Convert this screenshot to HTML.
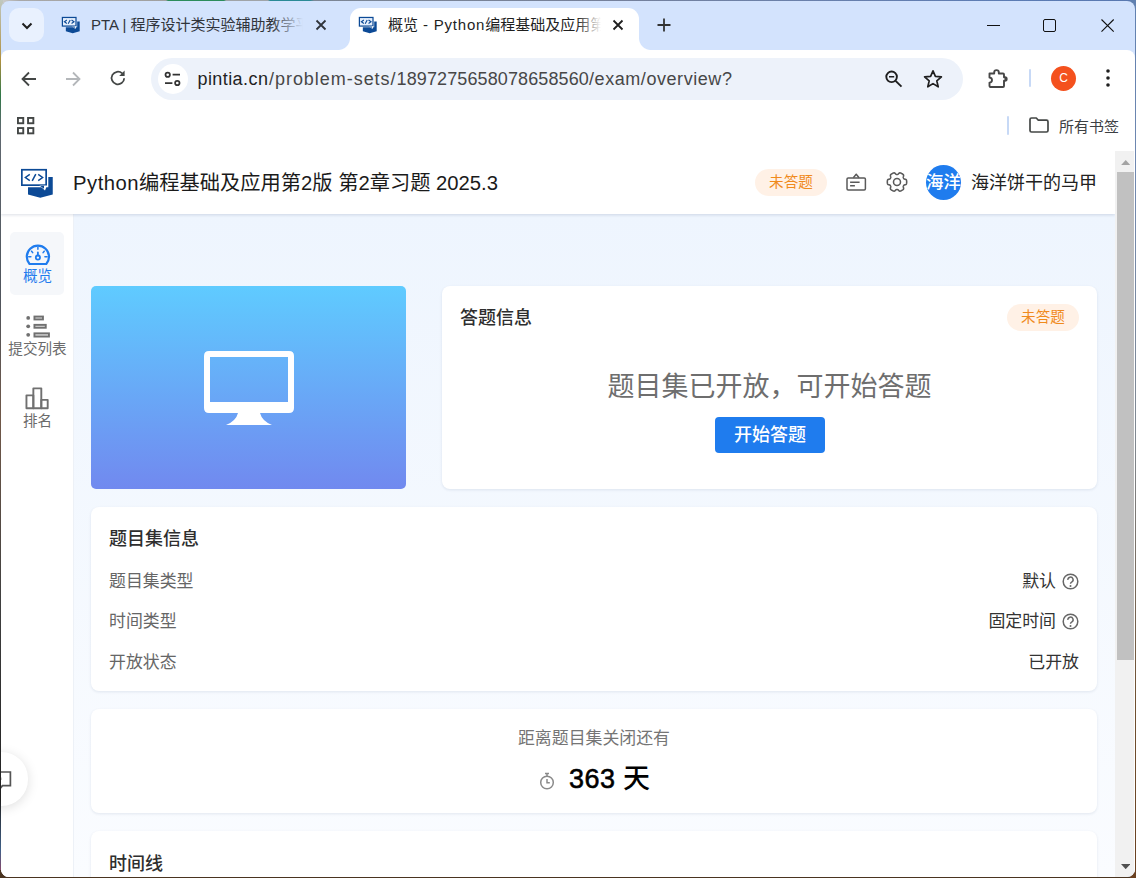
<!DOCTYPE html>
<html lang="zh-CN">
<head>
<meta charset="utf-8">
<title>概览 - Python编程基础及应用第2版 第2章习题 2025.3</title>
<style>
*{box-sizing:border-box;margin:0;padding:0}
html,body{width:1136px;height:878px;overflow:hidden}
body{position:relative;font-family:"Liberation Sans","Noto Sans CJK SC",sans-serif;background:#6a4a2a;color:#222}
.abs{position:absolute}
/* desktop strip behind window */
#desk-top{left:0;top:0;width:1136px;height:3px;background:linear-gradient(90deg,#d0d0d0 0,#a8a8a8 20px,#a0a0a0 166px,#2c8c5c 168px,#2c8c5c 224px,#a0a4a8 226px,#a0a4a8 268px,#2a8a96 270px,#2a8a96 310px,#7c8694 314px,#76819a 600px,#6a80aa 800px,#5c7cb4 1000px,#5878b0 100%)}
#desk-left{left:0;top:0;width:3px;height:878px;background:linear-gradient(180deg,#c0c8c0 0,#b09040 60px,#307848 95px,#606870 130px,#50555c 300px,#705848 420px,#404040 600px,#202020 800px,#406088 850px,#a04060 100%)}
#desk-bottom{left:0;top:870px;width:1136px;height:8px;background:#4a3420}
#desk-right{left:1130px;top:0;width:6px;height:878px;background:linear-gradient(180deg,#6080b0 0,#7088b0 20%,#808890 50%,#705030 80%,#6a4020 100%)}
#win{left:1px;top:1px;width:1134px;height:876px;border-radius:8px;background:#d3e3fd;overflow:hidden}
/* tab strip */
#tabsearch{left:8px;top:7px;width:35px;height:34px;border-radius:10px;background:#e9f1fe}
.tabtitle{font-size:15px;line-height:20px;color:#1f1f1f;white-space:nowrap;overflow:hidden}
#tab1-title{left:90px;top:14px;width:212px;color:#30343a}
#tab1-fade{left:270px;top:12px;width:32px;height:24px;background:linear-gradient(90deg,rgba(211,227,253,0),#d3e3fd)}
#tab2{left:349px;top:7px;width:289px;height:43px;background:#fff;border-radius:11px 11px 0 0}
#tab2-title{left:387px;top:14px;width:213px}
#tab2-fade{left:576px;top:12px;width:24px;height:24px;background:linear-gradient(90deg,rgba(255,255,255,0),#fff)}
.curveL{left:337px;top:37px;width:12px;height:12px;background:radial-gradient(circle at 0 0,rgba(255,255,255,0) 11.5px,#fff 12.5px)}
.curveR{left:638px;top:37px;width:12px;height:12px;background:radial-gradient(circle at 100% 0,rgba(255,255,255,0) 11.5px,#fff 12.5px)}
/* toolbar */
#toolbar{left:0;top:49px;width:1134px;height:101px;background:#fff;border-radius:8px 8px 0 0}
#omni{left:150px;top:57px;width:812px;height:42px;border-radius:21px;background:#edf2fa}
#siteinfo{left:156.500px;top:62.500px;width:30px;height:30px;border-radius:50%;background:#fff}
.u{top:66px;font-size:18px;line-height:24px;color:#474747;white-space:nowrap}
#prof{left:1050px;top:65px;width:25px;height:25px;border-radius:50%;background:#f4511e;color:#fff;font-size:12px;line-height:25px;text-align:center}
#bm-text{left:1058px;top:116px;font-size:15px;line-height:20px;color:#3c4043;white-space:nowrap}
/* page */
#page{left:0;top:149px;width:1114px;height:727px;background:linear-gradient(180deg,#eef5fe 64px,#fafcff 727px);overflow:hidden}
#scroll{left:1114px;top:150px;width:20px;height:726px;background:#f1f1f1;border-right:1px solid #fff}
#thumb{left:1116px;top:171px;width:17px;height:488px;background:#c1c1c1}
#header{left:0;top:0;width:1114px;height:64px;background:#fff;box-shadow:0 1px 3px rgba(0,30,80,.14)}
#title{left:72px;top:18px;font-size:20.25px;line-height:30px;color:#1a1a1a;white-space:nowrap}
.pill{border-radius:14px;background:#fff1e6;color:#f08a1c;font-size:14.6px;line-height:27px;text-align:center;height:27px;width:72px}
#avatar{left:925px;top:15px;width:35px;height:35px;border-radius:50%;background:#1f7cee;color:#fff;font-weight:500;font-size:17.5px;line-height:35px;text-align:center;white-space:nowrap;overflow:hidden}
#uname{left:970px;top:18px;font-size:18px;line-height:30px;color:#222;white-space:nowrap}
#side{left:0;top:64px;width:73px;height:663px;background:#fff;border-right:1px solid #edf1f7}
.navitem{left:9px;width:54px;height:62px;border-radius:5px}
.navtxt{left:0;width:73px;text-align:center;font-size:14.6px;line-height:18px;color:#6b6b6b;white-space:nowrap}
.card{background:#fff;border-radius:8px;box-shadow:0 1px 3px rgba(20,50,100,.10)}
.h{font-size:18px;line-height:24px;font-weight:500;color:#2e2e2e;white-space:nowrap}
.lbl{font-size:16.9px;line-height:24px;color:#666;white-space:nowrap}
.val{font-size:16.9px;line-height:24px;color:#333;white-space:nowrap;text-align:right}
</style>
</head>
<body>
<div class="abs" id="desk-top"></div>
<div class="abs" id="desk-left"></div>
<div class="abs" id="desk-bottom"></div>
<div class="abs" id="desk-right"></div>

<div class="abs" id="win">
  <!-- ===== tab strip ===== -->
  <div class="abs" id="tabsearch"></div>
  <svg class="abs" style="left:19px;top:19px" width="14" height="12" viewBox="0 0 14 12"><path d="M2.5 3.5 L7 8 L11.5 3.5" fill="none" stroke="#1f1f1f" stroke-width="2"/></svg>

  <div class="abs tabtitle" id="tab1-title">PTA | 程序设计类实验辅助教学平台</div>
  <div class="abs" id="tab1-fade"></div>
  <svg class="abs" style="left:314px;top:18px" width="12" height="12" viewBox="0 0 12 12"><path d="M1.5 1.5 L10.5 10.5 M10.5 1.5 L1.5 10.5" stroke="#30343a" stroke-width="1.8" fill="none"/></svg>

  <div class="abs" id="tab2"></div>
  <div class="abs curveL"></div>
  <div class="abs curveR"></div>
  <div class="abs tabtitle" id="tab2-title">概览<span style="letter-spacing:0.8px"> - Python</span>编程基础及应用第2版</div>
  <div class="abs" id="tab2-fade"></div>
  <svg class="abs" style="left:611px;top:18px" width="12" height="12" viewBox="0 0 12 12"><path d="M1.5 1.5 L10.5 10.5 M10.5 1.5 L1.5 10.5" stroke="#1f1f1f" stroke-width="1.8" fill="none"/></svg>
  <svg class="abs" style="left:656px;top:17px" width="14" height="14" viewBox="0 0 14 14"><path d="M7 0.5 V13.5 M0.5 7 H13.5" stroke="#333" stroke-width="1.8" fill="none"/></svg>

  <svg class="abs" style="left:57.1px;top:10.8px" width="26.88" height="24.64" viewBox="0 0 48 44"><path d="M34.300 17 H38.750 V34.500 L26.250 37.750 L14 34.500 V27.250 H34.300 Z" fill="#0c4a96"/><rect x="7.850" y="9.750" width="24.300" height="15.400" fill="#e6effc" stroke="#0c4a96" stroke-width="2.2"/><path d="M25.500 25.500 H33 L31 30.400 Z" fill="#fff"/><path d="M25.800 25.800 H30 V28.700 Z" fill="#0c4a96"/><path d="M15.800 14.400 L11.400 17.500 L15.800 20.600 M24.200 14.400 L28.600 17.500 L24.200 20.600 M21.800 14.200 L18.200 20.900" fill="none" stroke="#0c4a96" stroke-width="2"/></svg>
  <svg class="abs" style="left:354.1px;top:10.8px" width="26.88" height="24.64" viewBox="0 0 48 44"><path d="M34.300 17 H38.750 V34.500 L26.250 37.750 L14 34.500 V27.250 H34.300 Z" fill="#0c4a96"/><rect x="7.850" y="9.750" width="24.300" height="15.400" fill="#e6effc" stroke="#0c4a96" stroke-width="2.2"/><path d="M25.500 25.500 H33 L31 30.400 Z" fill="#fff"/><path d="M25.800 25.800 H30 V28.700 Z" fill="#0c4a96"/><path d="M15.800 14.400 L11.400 17.500 L15.800 20.600 M24.200 14.400 L28.600 17.500 L24.200 20.600 M21.800 14.200 L18.200 20.900" fill="none" stroke="#0c4a96" stroke-width="2"/></svg>
  <!-- window controls -->
  <svg class="abs" style="left:986px;top:18px" width="14" height="12" viewBox="0 0 14 12"><path d="M0 6.500 H13" stroke="#111" stroke-width="1"/></svg>
  <svg class="abs" style="left:1042px;top:18px" width="14" height="14" viewBox="0 0 14 14"><rect x="0.5" y="0.5" width="12" height="12" rx="1.500" fill="none" stroke="#111" stroke-width="1"/></svg>
  <svg class="abs" style="left:1100px;top:18px" width="14" height="14" viewBox="0 0 14 14"><path d="M0.500 0.500 L12.700 12.700 M12.700 0.500 L0.500 12.700" stroke="#111" stroke-width="1.1" fill="none"/></svg>

  <!-- ===== toolbar ===== -->
  <div class="abs" id="toolbar"></div>
  <div class="abs" id="omni"></div>
  <div class="abs" id="siteinfo"></div>
  <div class="abs u" style="left:196.5px;color:#1f1f1f;letter-spacing:0.42px">pintia.cn</div><div class="abs u" style="left:268px;letter-spacing:0.96px">/problem-sets/</div><div class="abs u" style="left:395.5px;letter-spacing:0.12px">1897275658078658560</div><div class="abs u" style="left:588px;letter-spacing:0.56px">/exam/overview?</div>

  <!-- nav icons -->
  <svg class="abs" style="left:18px;top:68px" width="20" height="20" viewBox="0 0 20 20"><path d="M17 10 H4 M10 3.5 L3.5 10 L10 16.5" fill="none" stroke="#444746" stroke-width="1.8"/></svg>
  <svg class="abs" style="left:62px;top:68px" width="20" height="20" viewBox="0 0 20 20"><path d="M3 10 H16 M10 3.5 L16.5 10 L10 16.5" fill="none" stroke="#b4b7ba" stroke-width="1.8"/></svg>
  <svg class="abs" style="left:107px;top:67px" width="20" height="20" viewBox="0 0 20 20"><path d="M16.2 10.2 A6.3 6.3 0 1 1 14.2 5.4" fill="none" stroke="#444746" stroke-width="1.8"/><path d="M16.6 2.6 V8 H11.2 Z" fill="#444746"/></svg>
  <!-- site info (tune) icon -->
  <svg class="abs" style="left:161px;top:67px" width="22" height="22" viewBox="0 0 22 22"><g fill="none" stroke="#333" stroke-width="1.750"><circle cx="5.700" cy="6.700" r="2.200"/><path d="M10.600 6.700 H18"/><circle cx="15.300" cy="15" r="2.200"/><path d="M3 15 H10.400"/></g></svg>
  <!-- zoom icon -->
  <svg class="abs" style="left:882px;top:67px" width="22" height="22" viewBox="0 0 22 22"><g fill="none" stroke="#1f1f1f" stroke-width="1.9"><circle cx="8.6" cy="8.8" r="5.3"/><path d="M12.6 12.8 L18.5 18.7"/><path d="M6 8.8 H11.2" stroke-width="1.6"/></g></svg>
  <!-- star -->
  <svg class="abs" style="left:921px;top:67px" width="22" height="22" viewBox="0 0 22 22"><path d="M11 2.8 L13.4 8.4 L19.4 8.9 L14.8 12.9 L16.2 18.8 L11 15.6 L5.8 18.8 L7.2 12.9 L2.6 8.9 L8.6 8.4 Z" fill="none" stroke="#1f1f1f" stroke-width="1.7" stroke-linejoin="round"/></svg>
  <!-- extensions -->
  <svg class="abs" style="left:985px;top:66px" width="24" height="24" viewBox="0 0 24 24"><path d="M3.500 6.500 H8.200 V5.400 A2.300 2.300 0 0 1 12.800 5.400 V6.500 H17 Q18 6.500 18 7.500 V10.300 H19 A1.700 1.700 0 0 1 19 13.700 H18 V19 Q18 20 17 20 H4.500 Q3.500 20 3.500 19 V15.600 A2.500 2.500 0 0 0 3.500 10.600 Z" fill="none" stroke="#474747" stroke-width="1.900" stroke-linejoin="round"/><path d="M18.500 10.300 H19.300 A1.700 1.700 0 0 1 19.300 13.700 H18.500 Z" fill="#474747"/></svg>
  <div class="abs" style="left:1028px;top:68px;width:2px;height:18px;background:#c7d9f6;border-radius:1px"></div>
  <!-- menu dots -->
  <svg class="abs" style="left:1102px;top:66px" width="10" height="22" viewBox="0 0 10 22"><g fill="#1f1f1f"><circle cx="5" cy="4" r="1.8"/><circle cx="5" cy="11" r="1.8"/><circle cx="5" cy="18" r="1.8"/></g></svg>
  <!-- apps grid -->
  <svg class="abs" style="left:15.900px;top:115.900px" width="18" height="18" viewBox="0 0 18 18"><g fill="none" stroke="#444746" stroke-width="1.900"><rect x="0.950" y="0.950" width="5.300" height="5.300"/><rect x="11.050" y="0.950" width="5.300" height="5.300"/><rect x="0.950" y="11.050" width="5.300" height="5.300"/><rect x="11.050" y="11.050" width="5.300" height="5.300"/></g></svg>
  <div class="abs" style="left:1005.500px;top:115px;width:2.500px;height:19px;background:#c7d9f6;border-radius:1px"></div>
  <svg class="abs" style="left:1027px;top:115px" width="22" height="18" viewBox="0 0 22 18"><path d="M2 3.500 Q2 2 3.500 2 H8.300 L10.300 4.200 H18.500 Q20 4.200 20 5.700 V14.500 Q20 16 18.500 16 H3.500 Q2 16 2 14.500 Z" fill="none" stroke="#444746" stroke-width="1.7" stroke-linejoin="round"/></svg>
  <div class="abs" id="prof">C</div>
  <div class="abs" id="bm-text">所有书签</div>

  <!-- ===== page ===== -->
  <div class="abs" id="page">
    <div class="abs" id="side"></div>

    <!-- sidebar items (page coords: y = screen - 150) -->
    <div class="abs navitem" style="top:82px;height:63px;background:#f5f7fa"></div>
    <svg class="abs" style="left:24px;top:93px" width="26" height="24" viewBox="0 0 26 24"><g fill="none" stroke="#1f7cee" stroke-linecap="round"><path d="M4.540 21 H21.260 A11.100 11.100 0 1 0 4.540 21 Z" stroke-width="2.200" stroke-linejoin="round"/><circle cx="12.900" cy="14.600" r="2.100" stroke-width="1.800"/><path d="M12.900 12.300 V9.500" stroke-width="1.800"/><path d="M12.900 4.300 V6.300 M6.600 8.200 L7.700 9.600 M19.200 8.200 L18.100 9.600 M3.700 13.700 H5.900 M19.900 13.700 H22.100" stroke-width="1.500"/></g></svg>
    <div class="abs navtxt" style="top:117px;color:#1f7cee">概览</div>

    <svg class="abs" style="left:25px;top:164px" width="26" height="24" viewBox="0 0 26 24"><g fill="#707070"><circle cx="2.200" cy="3.900" r="1.900"/><circle cx="2.200" cy="12.300" r="1.900"/><circle cx="2.200" cy="20.800" r="1.900"/></g><g fill="#ddd" stroke="#707070" stroke-width="1.900"><rect x="8.450" y="2.550" width="8.500" height="2.900"/><rect x="8.450" y="10.850" width="11.300" height="2.900"/><rect x="8.450" y="19.350" width="14.500" height="3.200"/></g></svg>
    <div class="abs navtxt" style="top:190px">提交列表</div>

    <svg class="abs" style="left:24px;top:236px" width="26" height="24" viewBox="0 0 26 24"><g fill="none" stroke="#707070" stroke-width="1.900" stroke-linejoin="round"><rect x="1.450" y="9.350" width="6.900" height="12.900"/><rect x="8.350" y="2.350" width="7.950" height="19.900"/><rect x="16.300" y="13.850" width="6.400" height="8.400"/></g></svg>
    <div class="abs navtxt" style="top:262px">排名</div>

    <!-- floating feedback -->
    <div class="abs" style="left:-26.500px;top:602px;width:53.500px;height:53.500px;border-radius:50%;background:#fff;box-shadow:0 2px 12px rgba(0,0,0,.13)"></div>
    <svg class="abs" style="left:-8px;top:619px" width="20" height="22" viewBox="0 0 20 22"><path d="M1 3 H17.400 V16.600 H9.500 L7.200 19.500 V16.600 H1 Z" fill="none" stroke="#555" stroke-width="1.700"/><path d="M5 9.800 H8.300" stroke="#555" stroke-width="2.400"/></svg>

    <!-- banner -->
    <div class="abs" style="left:90px;top:136px;width:315px;height:203px;border-radius:5px;background:linear-gradient(180deg,#5fcbff 0,#7189ef 100%)"></div>
    <svg class="abs" style="left:203px;top:201px" width="90" height="76" viewBox="0 0 90 76"><path fill="#fff" fill-rule="evenodd" d="M5 0 H85 Q90 0 90 5 V57 Q90 62 85 62 H5 Q0 62 0 57 V5 Q0 0 5 0 Z M6 6 V51 H84 V6 Z"/><path fill="#fff" d="M34 62 H56 Q58 70 68 74 H22 Q32 70 34 62 Z"/></svg>

    <!-- answer info card -->
    <div class="abs card" style="left:441px;top:136px;width:655px;height:203px"></div>
    <div class="abs h" style="left:459px;top:156px">答题信息</div>
    <div class="abs pill" style="left:1006px;top:154px">未答题</div>
    <div class="abs" style="left:441px;top:219px;width:655px;text-align:center;font-size:27px;line-height:36px;color:#6e6e6e;white-space:nowrap">题目集已开放，可开始答题</div>
    <div class="abs" style="left:714px;top:267px;width:110px;height:36px;border-radius:4px;background:#1f7cee;color:#fff;font-size:18px;line-height:36px;text-align:center;font-weight:500">开始答题</div>

    <!-- set info card -->
    <div class="abs card" style="left:90px;top:357px;width:1006px;height:184px"></div>
    <div class="abs h" style="left:108px;top:377px">题目集信息</div>
    <div class="abs lbl" style="left:108px;top:420px">题目集类型</div>
    <div class="abs lbl" style="left:108px;top:460px">时间类型</div>
    <div class="abs lbl" style="left:108px;top:501px">开放状态</div>
    <div class="abs val" style="right:59px;top:420px">默认</div>
    <div class="abs val" style="right:59px;top:460px">固定时间</div>
    <div class="abs val" style="right:36px;top:501px">已开放</div>
    <svg class="abs q" style="left:1060.600px;top:422.6px" width="17" height="17" viewBox="0 0 17 17"><circle cx="8.500" cy="8.500" r="7.300" fill="none" stroke="#666" stroke-width="1.500"/><path d="M5.900 6.900 A2.600 2.600 0 1 1 9.900 8.900 Q8.500 9.700 8.500 10.800" fill="none" stroke="#666" stroke-width="1.500"/><circle cx="8.500" cy="12.900" r="1" fill="#666"/></svg>
    <svg class="abs q" style="left:1060.600px;top:462.6px" width="17" height="17" viewBox="0 0 17 17"><circle cx="8.500" cy="8.500" r="7.300" fill="none" stroke="#666" stroke-width="1.500"/><path d="M5.900 6.900 A2.600 2.600 0 1 1 9.900 8.900 Q8.500 9.700 8.500 10.800" fill="none" stroke="#666" stroke-width="1.500"/><circle cx="8.500" cy="12.900" r="1" fill="#666"/></svg>

    <!-- countdown card -->
    <div class="abs card" style="left:90px;top:559px;width:1006px;height:104px"></div>
    <div class="abs" style="left:90px;top:577px;width:1006px;text-align:center;font-size:16.9px;line-height:24px;color:#757575;white-space:nowrap">距离题目集关闭还有</div>
    <svg class="abs" style="left:538px;top:622px" width="16" height="18" viewBox="0 0 16 18"><g fill="none" stroke="#8a8a8a" stroke-width="1.500"><circle cx="8" cy="10.500" r="6.300"/><path d="M6 1.500 H10 M8 1.500 V4 M8 7 V10.800 H10.800"/></g></svg>
    <div class="abs" style="left:568px;top:611px;font-size:27px;line-height:36px;font-weight:500;color:#000;white-space:nowrap"><span style="-webkit-text-stroke:0.55px #000;letter-spacing:0.5px">363</span> 天</div>

    <!-- timeline card -->
    <div class="abs card" style="left:90px;top:681px;width:1006px;height:120px"></div>
    <div class="abs h" style="left:108px;top:701.500px">时间线</div>
    <div class="abs" id="header"></div>
    <div class="abs" id="title"><span style="letter-spacing:0.5px">Python</span>编程基础及应用第2版 第2章习题 2025.3</div>

    <!-- logo -->
    <svg class="abs" style="left:13px;top:10px" width="48" height="44" viewBox="0 0 48 44"><path d="M34.300 17 H38.750 V34.500 L26.250 37.750 L14 34.500 V27.250 H34.300 Z" fill="#0c4a96"/><rect x="7.850" y="9.750" width="24.300" height="15.400" fill="#fff" stroke="#0c4a96" stroke-width="1.700"/><path d="M25.500 25.500 H33 L31 30.400 Z" fill="#fff"/><path d="M25.800 25.800 H30 V28.700 Z" fill="#0c4a96"/><path d="M15.800 14.400 L11.400 17.500 L15.800 20.600 M24.200 14.400 L28.600 17.500 L24.200 20.600 M21.800 14.200 L18.200 20.900" fill="none" stroke="#0c4a96" stroke-width="1.500"/></svg>
    <!-- header icons -->
    <svg class="abs" style="left:843px;top:20px" width="26" height="24" viewBox="0 0 26 24"><g fill="none" stroke="#5a5a5a" stroke-width="1.500" stroke-linejoin="round"><rect x="3" y="7.900" width="18.400" height="12.100" rx="1.200"/><path d="M9.300 7.700 L12.200 4.200 L15.100 7.700 M6.100 12.200 H15.600 M6.100 15.800 H10.900"/></g></svg>
    <svg class="abs" style="left:884px;top:20.200px" width="24" height="24" viewBox="0 0 24 24"><g fill="none" stroke="#5a5a5a" stroke-width="1.550" stroke-linejoin="round"><path d="M21.70 12.00 L21.69 12.34 L21.67 12.68 L21.64 13.01 L21.59 13.35 L21.51 13.68 L21.39 14.00 L21.19 14.29 L20.85 14.54 L20.35 14.71 L19.80 14.84 L19.36 14.97 L19.06 15.14 L18.85 15.34 L18.68 15.55 L18.54 15.78 L18.42 16.01 L18.32 16.26 L18.25 16.54 L18.26 16.89 L18.36 17.34 L18.52 17.87 L18.62 18.40 L18.58 18.82 L18.43 19.14 L18.21 19.40 L17.96 19.63 L17.69 19.84 L17.42 20.04 L17.14 20.22 L16.85 20.40 L16.55 20.56 L16.25 20.71 L15.94 20.85 L15.63 20.97 L15.30 21.07 L14.97 21.13 L14.61 21.11 L14.23 20.93 L13.82 20.59 L13.44 20.17 L13.10 19.86 L12.81 19.68 L12.53 19.60 L12.26 19.56 L12.00 19.55 L11.74 19.56 L11.47 19.60 L11.19 19.68 L10.90 19.86 L10.56 20.17 L10.18 20.59 L9.77 20.93 L9.39 21.11 L9.03 21.13 L8.70 21.07 L8.37 20.97 L8.06 20.85 L7.75 20.71 L7.45 20.56 L7.15 20.40 L6.86 20.22 L6.58 20.04 L6.31 19.84 L6.04 19.63 L5.79 19.40 L5.57 19.14 L5.42 18.82 L5.38 18.40 L5.48 17.87 L5.64 17.34 L5.74 16.89 L5.75 16.54 L5.68 16.26 L5.58 16.01 L5.46 15.78 L5.32 15.55 L5.15 15.34 L4.94 15.14 L4.64 14.97 L4.20 14.84 L3.65 14.71 L3.15 14.54 L2.81 14.29 L2.61 14.00 L2.49 13.68 L2.41 13.35 L2.36 13.01 L2.33 12.68 L2.31 12.34 L2.30 12.00 L2.31 11.66 L2.33 11.32 L2.36 10.99 L2.41 10.65 L2.49 10.32 L2.61 10.00 L2.81 9.71 L3.15 9.46 L3.65 9.29 L4.20 9.16 L4.64 9.03 L4.94 8.86 L5.15 8.66 L5.32 8.45 L5.46 8.22 L5.58 7.99 L5.68 7.74 L5.75 7.46 L5.74 7.11 L5.64 6.66 L5.48 6.13 L5.38 5.60 L5.42 5.18 L5.57 4.86 L5.79 4.60 L6.04 4.37 L6.31 4.16 L6.58 3.96 L6.86 3.78 L7.15 3.60 L7.45 3.44 L7.75 3.29 L8.06 3.15 L8.37 3.03 L8.70 2.93 L9.03 2.87 L9.39 2.89 L9.77 3.07 L10.18 3.41 L10.56 3.83 L10.90 4.14 L11.19 4.32 L11.47 4.40 L11.74 4.44 L12.00 4.45 L12.26 4.44 L12.53 4.40 L12.81 4.32 L13.10 4.14 L13.44 3.83 L13.82 3.41 L14.23 3.07 L14.61 2.89 L14.97 2.87 L15.30 2.93 L15.63 3.03 L15.94 3.15 L16.25 3.29 L16.55 3.44 L16.85 3.60 L17.14 3.78 L17.42 3.96 L17.69 4.16 L17.96 4.37 L18.21 4.60 L18.43 4.86 L18.58 5.18 L18.62 5.60 L18.52 6.13 L18.36 6.66 L18.26 7.11 L18.25 7.46 L18.32 7.74 L18.42 7.99 L18.54 8.22 L18.68 8.45 L18.85 8.66 L19.06 8.86 L19.36 9.03 L19.80 9.16 L20.35 9.29 L20.85 9.46 L21.19 9.71 L21.39 10.00 L21.51 10.32 L21.59 10.65 L21.64 10.99 L21.67 11.32 L21.69 11.66 Z"/><circle cx="12" cy="12" r="3.500"/></g></svg>
    <div class="abs pill" style="left:754px;top:19px">未答题</div>
    <div class="abs" id="avatar">海洋</div>
    <div class="abs" id="uname">海洋饼干的马甲</div>
  </div>
  <div class="abs" id="scroll"></div>
  <div class="abs" id="thumb"></div>
  <svg class="abs" style="left:1119.800px;top:158.800px" width="9.400" height="5.200" viewBox="0 0 9.400 5.200"><path d="M0 5.200 L4.700 0 L9.400 5.200 Z" fill="#a3a3a3"/></svg>
  <svg class="abs" style="left:1119.800px;top:862.800px" width="9.400" height="5.200" viewBox="0 0 9.400 5.200"><path d="M0 0 L4.700 5.200 L9.400 0 Z" fill="#505050"/></svg>
</div>
</body>
</html>
